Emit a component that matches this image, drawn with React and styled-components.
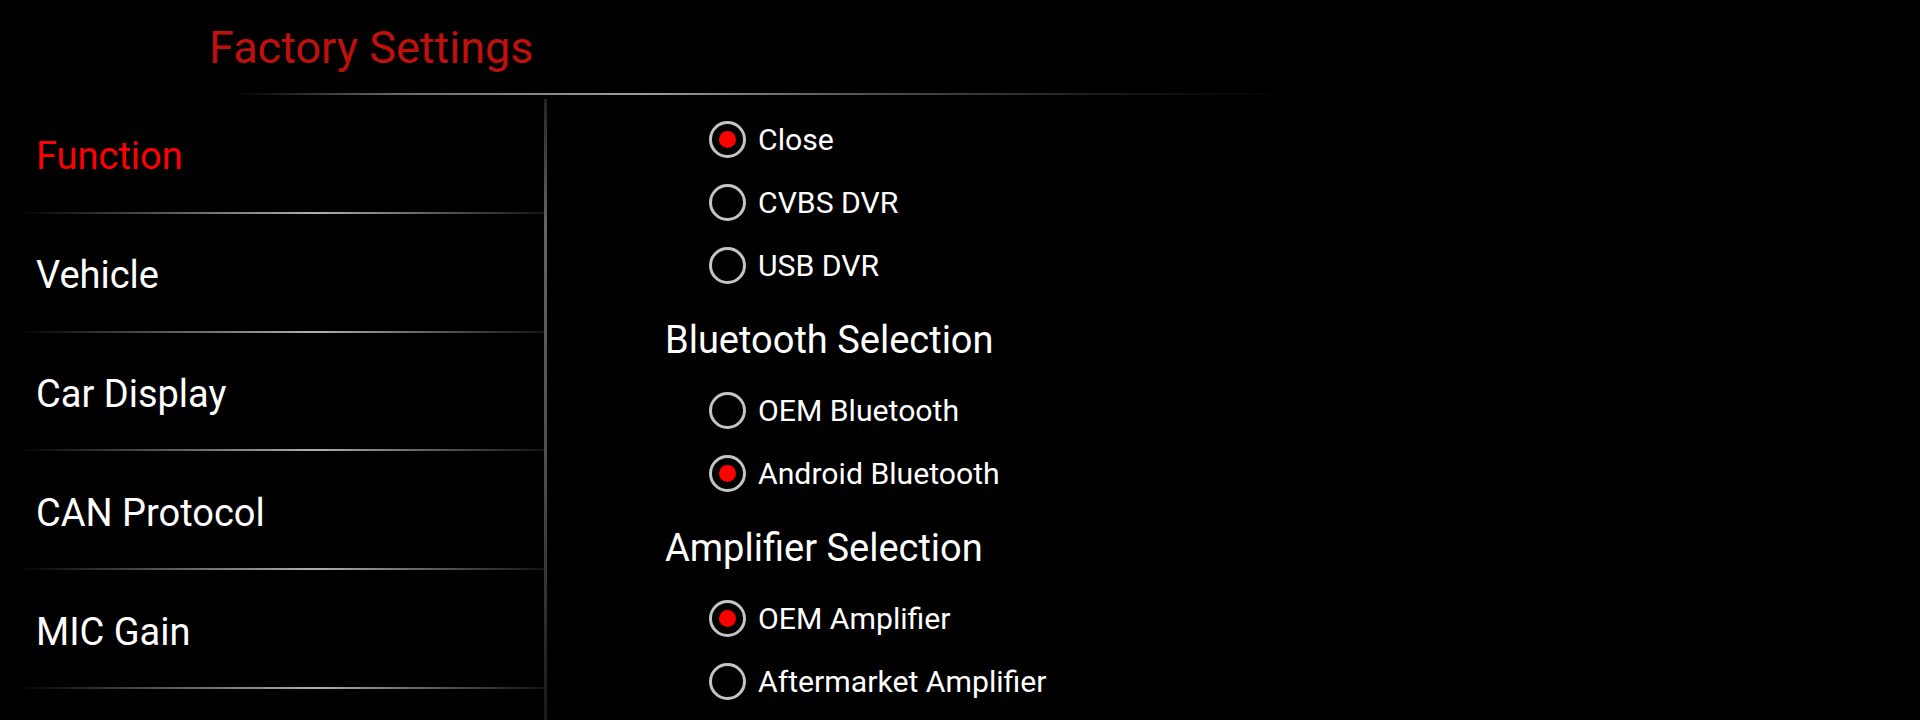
import React from "react";
import styled, { createGlobalStyle } from "styled-components";

const GlobalStyle = createGlobalStyle`
  html, body {
    margin: 0;
    padding: 0;
    background: #000;
  }
  body {
    font-family: Roboto, "Noto Sans", "Liberation Sans", sans-serif;
    color: #fff;
    overflow: hidden;
  }
`;

const Screen = styled.div`
  width: 1920px;
  height: 720px;
  background: #000;
  display: flex;
  flex-direction: column;
  overflow: hidden;
`;

const Header = styled.header`
  height: 93px;
  box-sizing: border-box;
  padding: 21px 0 0 209px;
`;

const Title = styled.h1`
  margin: 0;
  font-size: 45px;
  font-weight: 400;
  line-height: normal;
  color: #c0100c;
`;

const HeaderRule = styled.div`
  height: 2px;
  width: 1070px;
  margin-left: 236px;
  background: linear-gradient(
    90deg,
    rgba(120, 120, 120, 0) 0%,
    rgba(150, 150, 150, 0.7) 15%,
    rgba(175, 175, 175, 0.9) 38%,
    rgba(130, 130, 130, 0.6) 60%,
    rgba(60, 60, 60, 0.3) 85%,
    rgba(0, 0, 0, 0) 100%
  );
`;

const Body = styled.div`
  flex: 1;
  display: flex;
  min-height: 0;
`;

const Sidebar = styled.nav`
  width: 544px;
  display: flex;
  flex-direction: column;
`;

const VRule = styled.div`
  width: 3px;
  margin-top: 4px;
  background: linear-gradient(
    180deg,
    rgba(60, 60, 60, 0.6) 0%,
    rgba(110, 110, 110, 0.9) 20%,
    rgba(90, 90, 90, 0.85) 60%,
    rgba(40, 40, 40, 0.6) 100%
  );
`;

const MenuItem = styled.div`
  height: 118.8px;
  box-sizing: border-box;
  padding: 4px 0 0 36px;
  display: flex;
  align-items: center;
  font-size: 38px;
  color: ${(p) => (p.$active ? "#ff0000" : "#ffffff")};
  background: linear-gradient(
      90deg,
      rgba(0, 0, 0, 0) 3%,
      rgba(90, 90, 90, 0.6) 20%,
      rgba(185, 185, 185, 0.95) 58%,
      rgba(120, 120, 120, 0.6) 85%,
      rgba(50, 50, 50, 0.4) 100%
    )
    left bottom / 100% 2px no-repeat;
`;

const Content = styled.main`
  flex: 1;
  box-sizing: border-box;
  padding: 13px 0 0 118px;
  display: flex;
  flex-direction: column;
`;

const SectionTitle = styled.div`
  height: 82px;
  box-sizing: border-box;
  padding-top: 3px;
  display: flex;
  align-items: center;
  font-size: 38px;
  color: #fff;
`;

const Option = styled.label`
  height: 63px;
  display: flex;
  align-items: center;
  padding-left: 44px;
  gap: 12px;
  font-size: 30.2px;
  color: #fff;
`;

const Ring = styled.span`
  width: 37px;
  height: 37px;
  box-sizing: border-box;
  border-radius: 50%;
  border: 3px solid #c4c4c4;
  display: flex;
  align-items: center;
  justify-content: center;
  flex-shrink: 0;
`;

const Dot = styled.span`
  width: 17px;
  height: 17px;
  border-radius: 50%;
  background: #ff0000;
`;

const Radio = ({ checked, children }) => (
  <Option>
    <Ring>{checked && <Dot />}</Ring>
    <span>{children}</span>
  </Option>
);

const menu = ["Function", "Vehicle", "Car Display", "CAN Protocol", "MIC Gain"];

export default function App() {
  return (
    <Screen>
      <GlobalStyle />
      <Header>
        <Title>Factory Settings</Title>
      </Header>
      <HeaderRule />
      <Body>
        <Sidebar>
          {menu.map((m, i) => (
            <MenuItem key={m} $active={i === 0}>
              {m}
            </MenuItem>
          ))}
        </Sidebar>
        <VRule />
        <Content>
          <Radio checked>Close</Radio>
          <Radio>CVBS DVR</Radio>
          <Radio>USB DVR</Radio>
          <SectionTitle>Bluetooth Selection</SectionTitle>
          <Radio>OEM Bluetooth</Radio>
          <Radio checked>Android Bluetooth</Radio>
          <SectionTitle>Amplifier Selection</SectionTitle>
          <Radio checked>OEM Amplifier</Radio>
          <Radio>Aftermarket Amplifier</Radio>
        </Content>
      </Body>
    </Screen>
  );
}
